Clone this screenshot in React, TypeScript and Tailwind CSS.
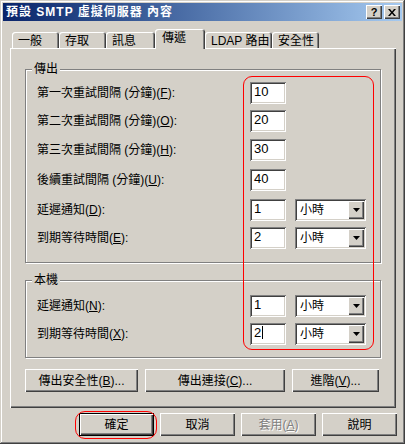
const font = "font-['Liberation_Sans','Noto_Sans_CJK_TC',sans-serif]";

const raised = 'bg-[#d4d0c8] shadow-[inset_1px_1px_#fff,inset_-1px_-1px_#404040,inset_-2px_-2px_#808080]';
const sunken = 'bg-white shadow-[inset_1px_1px_#808080,inset_-1px_-1px_#fff,inset_2px_2px_#404040,inset_-2px_-2px_#d4d0c8]';
const etched = 'border border-[#808080] shadow-[1px_1px_0_#fff,inset_1px_1px_0_#fff]';

function Edit({ value, caret }: { value: string; caret?: boolean }) {
  return (
    <div className={`w-[36px] h-[22px] ${sunken} flex items-start pl-[4px] pt-[3px] text-[13px] leading-[14px]`}>
      {value}
      {caret && <span className="w-px h-[13px] bg-black ml-px" />}
    </div>
  );
}

function Combo() {
  return (
    <div className={`w-[71px] h-[22px] ${sunken} flex items-center p-[2px]`}>
      <span className="flex-1 pl-[3px] text-[12px] leading-none">小時</span>
      <div className={`w-[16px] h-[18px] ${raised} flex items-center justify-center`}>
        <svg width="7" height="4" viewBox="0 0 7 4">
          <path d="M0 0h7L3.5 4z" fill="#000" />
        </svg>
      </div>
    </div>
  );
}

function Row({ label, k, value, combo, caret, mt }: { label: string; k: string; value: string; combo?: boolean; caret?: boolean; mt: string }) {
  return (
    <div className={`flex items-center h-[22px] ${mt}`}>
      <div className="w-[213px] text-[12px] leading-none">
        {label}(<u>{k}</u>):
      </div>
      <Edit value={value} caret={caret} />
      {combo && <div className="ml-[9px]"><Combo /></div>}
    </div>
  );
}

function Tab({ label, w, active }: { label: string; w: string; active?: boolean }) {
  if (active) {
    return (
      <div className={`${w} h-[20px] -mb-px relative z-10 bg-[#d4d0c8] rounded-t-[3px] shadow-[inset_1px_1px_#fff,inset_-1px_0_#404040,inset_-2px_0_#808080] pl-[7px] pt-[3px] text-[12px] leading-none`}>
        {label}
      </div>
    );
  }
  return (
    <div className={`${w} h-[16px] rounded-t-[3px] shadow-[inset_1px_1px_#fff,inset_-1px_0_#404040,inset_-2px_0_#808080] pl-[6px] pt-[3px] text-[12px] leading-none`}>
      {label}
    </div>
  );
}

export default function App() {
  return (
    <div className={`relative w-[405px] h-[444px] bg-[#d4d0c8] p-[3px] text-black ${font} shadow-[inset_-1px_-1px_#404040,inset_1px_1px_#d4d0c8,inset_-2px_-2px_#808080,inset_2px_2px_#fff]`}>
      {/* title bar */}
      <div className="h-[18px] bg-linear-to-r from-[#0a246a] to-[#a6caf0] flex items-center pl-[3px] pr-[2px]">
        <span className="flex-1 text-white font-bold text-[12px] leading-none tracking-[1px]">預設 SMTP 虛擬伺服器 內容</span>
        <div className="flex gap-[2px]">
          <div className={`w-[16px] h-[14px] ${raised} flex items-center justify-center text-[11px] font-bold leading-none pt-px`}>?</div>
          <div className={`w-[16px] h-[14px] ${raised} flex items-center justify-center`}>
            <svg width="8" height="7" viewBox="0 0 8 7">
              <path d="M0 0h2l2 2.5L6 0h2L5 3.5 8 7H6L4 4.5 2 7H0l3-3.5z" fill="#000" />
            </svg>
          </div>
        </div>
      </div>

      {/* tabs */}
      <div className="flex items-end h-[19px] mt-[8px] ml-[9px]">
        <Tab label="一般" w="w-[47px]" />
        <Tab label="存取" w="w-[47px]" />
        <Tab label="訊息" w="w-[49px]" />
        <Tab label="傳遞" w="w-[50px]" active />
        <Tab label="LDAP 路由" w="w-[67px]" />
        <Tab label="安全性" w="w-[47px]" />
      </div>

      {/* tab panel */}
      <div className="ml-[7px] w-[386px] h-[360px] shadow-[inset_1px_1px_#fff,inset_-1px_-1px_#404040,inset_-2px_-2px_#808080] flex flex-col pl-[15px]">
        <div className={`relative mt-[21px] w-[356px] ${etched} pl-[11px] pt-[12px] pb-[13px]`}>
          <span className="absolute -top-[7px] left-[6px] px-[2px] bg-[#d4d0c8] text-[12px] leading-none">傳出</span>
          <Row label="第一次重試間隔 (分鐘)" k="F" value="10" mt="mt-0" />
          <Row label="第二次重試間隔 (分鐘)" k="O" value="20" mt="mt-[6px]" />
          <Row label="第三次重試間隔 (分鐘)" k="H" value="30" mt="mt-[7px]" />
          <Row label="後續重試間隔 (分鐘)" k="U" value="40" mt="mt-[8px]" />
          <Row label="延遲通知" k="D" value="1" combo mt="mt-[8px]" />
          <Row label="到期等待時間" k="E" value="2" combo mt="mt-[6px]" />
        </div>

        <div className={`relative mt-[17px] w-[356px] ${etched} pl-[11px] pt-[14px] pb-[12px]`}>
          <span className="absolute -top-[7px] left-[6px] px-[2px] bg-[#d4d0c8] text-[12px] leading-none">本機</span>
          <Row label="延遲通知" k="N" value="1" combo mt="mt-0" />
          <Row label="到期等待時間" k="X" value="2" combo caret mt="mt-[6px]" />
        </div>

        <div className="flex gap-[7px] mt-[11px] text-[12px] leading-none">
          <div className={`w-[113px] h-[23px] ${raised} flex items-center justify-center`}>傳出安全性(<u>B</u>)...</div>
          <div className={`w-[140px] h-[23px] ${raised} flex items-center justify-center`}>傳出連接(<u>C</u>)...</div>
          <div className={`w-[87px] h-[23px] ${raised} flex items-center justify-center`}>進階(<u>V</u>)...</div>
        </div>
      </div>

      {/* dialog buttons */}
      <div className="flex gap-[6px] mt-[5px] ml-[76px] text-[12px] leading-none">
        <div className="w-[75px] h-[23px] border border-black">
          <div className={`w-full h-full ${raised} flex items-center justify-center`}>確定</div>
        </div>
        <div className={`w-[75px] h-[23px] ${raised} flex items-center justify-center`}>取消</div>
        <div className={`w-[75px] h-[23px] ${raised} flex items-center justify-center text-[#808080] [text-shadow:1px_1px_0_#fff]`}>套用(<u>A</u>)</div>
        <div className={`w-[75px] h-[23px] ${raised} flex items-center justify-center`}>說明</div>
      </div>

      {/* red annotations */}
      <div className="absolute left-[243px] top-[76px] w-[131px] h-[274px] border border-[#ff0000] rounded-[9px] pointer-events-none" />
      <div className="absolute left-[75px] top-[411px] w-[82px] h-[28px] border border-[#ff0000] rounded-[10px] pointer-events-none" />
    </div>
  );
}
